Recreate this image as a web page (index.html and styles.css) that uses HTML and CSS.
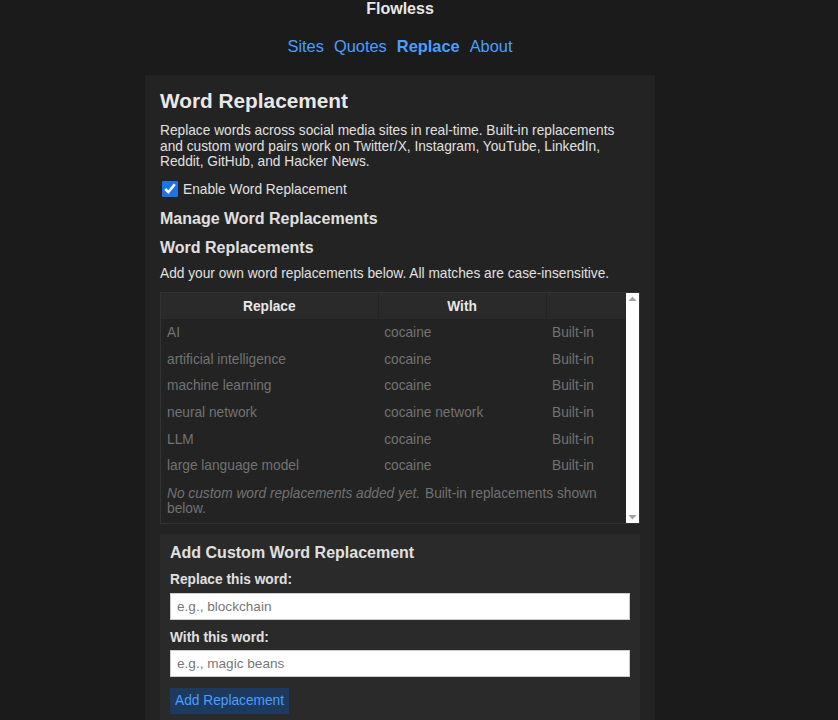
FILE: index.html
```html
<!DOCTYPE html>
<html lang="en">
<head>
<meta charset="utf-8">
<title>Flowless</title>
<link rel="stylesheet" href="styles.css">
</head>
<body>
<div class="page">
  <h1 class="brand">Flowless</h1>
  <nav class="nav">
    <a href="#" class="nav-link">Sites</a>
    <a href="#" class="nav-link">Quotes</a>
    <a href="#" class="nav-link active">Replace</a>
    <a href="#" class="nav-link">About</a>
  </nav>
  <main class="card">
    <h2 class="title">Word Replacement</h2>
    <p class="text">Replace words across social media sites in real-time. Built-in replacements and custom word pairs work on Twitter/X, Instagram, YouTube, LinkedIn, Reddit, GitHub, and Hacker News.</p>
    <label class="toggle"><input type="checkbox" class="check" checked> <span>Enable Word Replacement</span></label>
    <h3 class="subtitle first">Manage Word Replacements</h3>
    <h3 class="subtitle">Word Replacements</h3>
    <p class="text hint">Add your own word replacements below. All matches are case-insensitive.</p>
    <div class="list">
      <div class="list-body">
        <table class="table">
          <thead>
            <tr><th class="c1">Replace</th><th class="c2">With</th><th class="c3"></th></tr>
          </thead>
          <tbody>
            <tr><td>AI</td><td>cocaine</td><td>Built-in</td></tr>
            <tr><td>artificial intelligence</td><td>cocaine</td><td>Built-in</td></tr>
            <tr><td>machine learning</td><td>cocaine</td><td>Built-in</td></tr>
            <tr><td>neural network</td><td>cocaine network</td><td>Built-in</td></tr>
            <tr><td>LLM</td><td>cocaine</td><td>Built-in</td></tr>
            <tr><td>large language model</td><td>cocaine</td><td>Built-in</td></tr>
          </tbody>
        </table>
        <p class="note"><em>No custom word replacements added yet.</em> Built-in replacements shown below.</p>
      </div>
      <div class="scrollbar" aria-hidden="true">
        <svg class="arrow" width="13" height="12" viewBox="0 0 13 12"><polygon points="2.5,8 10.5,8 6.5,3.5" fill="#a3a3a3"/></svg>
        <svg class="arrow" width="13" height="12" viewBox="0 0 13 12"><polygon points="2.5,4 10.5,4 6.5,8.5" fill="#a3a3a3"/></svg>
      </div>
    </div>
    <section class="add-box">
      <h3 class="add-title">Add Custom Word Replacement</h3>
      <label class="field-label" for="from">Replace this word:</label>
      <input class="field" id="from" type="text" placeholder="e.g., blockchain">
      <label class="field-label" for="to">With this word:</label>
      <input class="field" id="to" type="text" placeholder="e.g., magic beans">
      <button class="btn" type="button">Add Replacement</button>
    </section>
  </main>
</div>
</body>
</html>
```
FILE: styles.css
```css
* { box-sizing: border-box; }
html, body { margin: 0; padding: 0; background: #1b1b1b; }
body {
  font-family: "Liberation Sans", Arial, sans-serif;
  color: #e0e0e0;
  font-size: 16px;
}
.page { width: 800px; }
.brand {
  margin: 0;
  font-size: 16px;
  line-height: 17px;
  font-weight: bold;
  text-align: center;
  color: #e8e8e8;
}
.nav {
  display: flex;
  justify-content: center;
  gap: 10px;
  margin-top: 20px;
  font-size: 16.4px;
  line-height: 19px;
}
.nav-link { color: #4a9eff; text-decoration: none; }
.nav-link.active { font-weight: bold; }
.card {
  width: 510px;
  margin: 19px auto 0;
  padding: 14px 15px 20px;
  background: #232323;
  min-height: 700px;
}
.title {
  margin: 0;
  font-size: 20.8px;
  line-height: 24px;
  color: #e8e8e8;
}
.text {
  margin: 10px 0 0;
  font-size: 13.72px;
  line-height: 15.6px;
}
.text.hint { margin-top: 8.5px; }
.toggle {
  display: flex;
  align-items: center;
  gap: 5px;
  margin-top: 11px;
  font-size: 13.72px;
  padding-left: 2px;
}
.check {
  margin: 0;
  width: 16px;
  height: 16px;
  accent-color: #1a73e8;
}
.toggle span { position: relative; top: 1px; }
.subtitle {
  margin: 11px 0 0;
  font-size: 16px;
  line-height: 18.4px;
}
.subtitle.first { margin-top: 13px; }
.list {
  display: flex;
  margin-top: 10px;
  border: 1px solid #333;
  height: 232px;
}
.list-body { flex: 1; min-width: 0; }
.scrollbar {
  width: 13px;
  flex: none;
  background: #fff;
  display: flex;
  flex-direction: column;
  justify-content: space-between;
}
.arrow { display: block; }
.table {
  width: 100%;
  border-collapse: collapse;
  font-size: 13.72px;
  line-height: 15.6px;
}
.table th {
  background: #2a2a2a;
  color: #e8e8e8;
  font-weight: bold;
  padding: 6px 6px 5px;
  border-right: 1px solid #222;
  border-bottom: 1px solid #232323;
  text-align: center;
}
.table th:last-child { border-right: none; }
.c1 { width: 46.7%; }
.c2 { width: 36.1%; }
.table td {
  color: #727272;
  padding: 5px 6px;
  border-bottom: 1px solid #242424;
  text-align: left;
}
.note {
  margin: 0;
  padding: 6px 6px 7px;
  font-size: 13.72px;
  line-height: 15.6px;
  color: #727272;
}
.note em { padding-right: 1px; }
.add-box {
  margin-top: 10px;
  background: #2a2a2a;
  padding: 10px 10px 10px;
  display: flex;
  flex-direction: column;
  align-items: flex-start;
}
.add-title {
  margin: 0;
  font-size: 16px;
  line-height: 18.4px;
}
.field-label {
  margin-top: 10px;
  font-size: 13.72px;
  font-weight: bold;
  line-height: 15.6px;
}
.field {
  margin-top: 5px;
  width: 100%;
  height: 27px;
  padding: 5px 6px;
  border: 1px solid #ccc;
  background: #fff;
  font-family: "Liberation Sans", Arial, sans-serif;
  font-size: 13.6px;
  color: #222;
}
.field::placeholder { color: #777; }
.btn {
  margin-top: 11px;
  padding: 5px;
  border: none;
  background: #1d3a5e;
  color: #4a9eff;
  font-family: "Liberation Sans", Arial, sans-serif;
  font-size: 13.72px;
  line-height: 16px;
  cursor: pointer;
}
```
